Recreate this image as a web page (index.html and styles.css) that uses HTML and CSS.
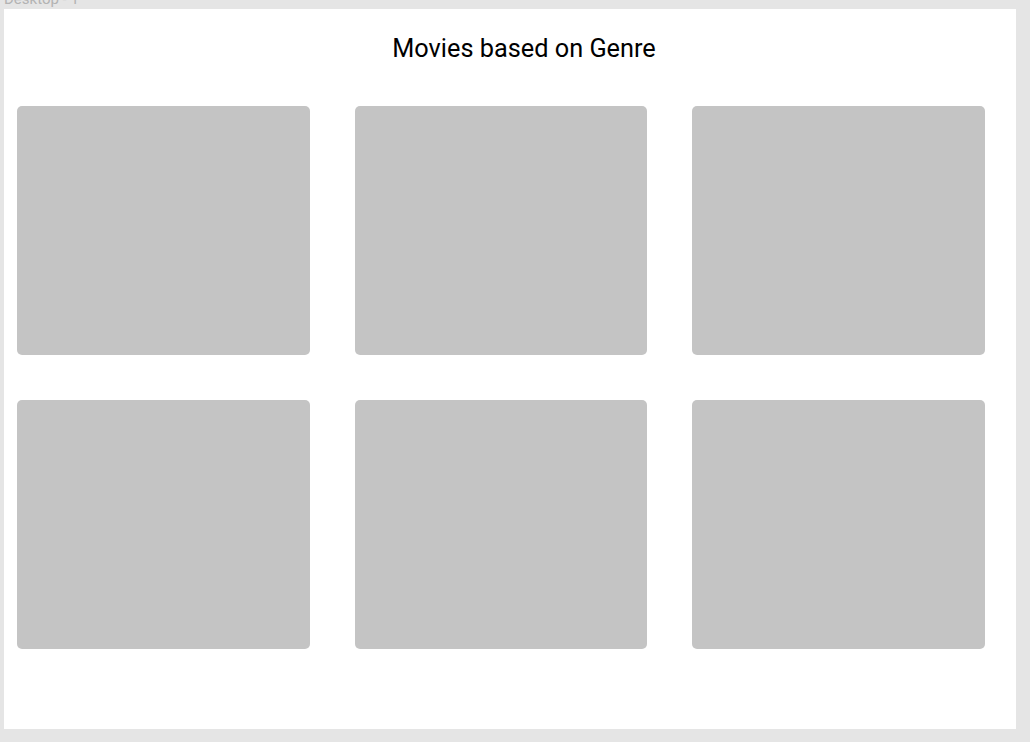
FILE: index.html
```html
<!DOCTYPE html>
<html>
<head>
<meta charset="utf-8">
<link rel="stylesheet" href="styles.css">
</head>
<body>
<div class="label">Desktop - 1</div>
<div class="frame">
  <h1 class="title">Movies based on Genre</h1>
  <div class="grid">
    <div class="card"></div>
    <div class="card"></div>
    <div class="card"></div>
    <div class="card"></div>
    <div class="card"></div>
    <div class="card"></div>
  </div>
</div>
</body>
</html>
```
FILE: styles.css
```css
html, body {
  margin: 0;
  padding: 0;
  background: #e5e5e5;
  font-family: Roboto, "Liberation Sans", sans-serif;
  overflow: hidden;
}
.label {
  font-size: 15px;
  line-height: 18px;
  color: #b3b3b3;
  margin: -10px 0 1px 4px;
  height: 18px;
}
.frame {
  margin-left: 4px;
  width: 1012px;
  height: 720px;
  background: #ffffff;
  box-sizing: border-box;
  padding-top: 24px;
}
.title {
  margin: 0;
  font-weight: 400;
  font-size: 25.3px;
  line-height: 32px;
  color: #000000;
  text-align: center;
  padding-left: 28px;
}
.grid {
  display: grid;
  grid-template-columns: repeat(3, 292.5px);
  grid-auto-rows: 248.5px;
  column-gap: 45px;
  row-gap: 45.5px;
  margin-top: 41px;
  margin-left: 13px;
}
.card {
  background: #c4c4c4;
  border-radius: 5px;
}
```
